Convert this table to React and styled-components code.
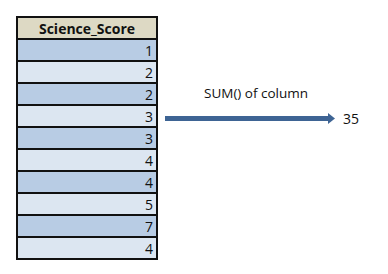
import styled, { createGlobalStyle } from "styled-components"

const scores = [1, 2, 2, 3, 3, 4, 4, 5, 7, 4]

export default function App() {
  return (
    <>
      <GlobalStyle />
      <Page>
        <Table>
          <HeaderCell>Science_Score</HeaderCell>
          {scores.map((s, i) => (
            <Cell key={i} $dark={i % 2 === 0}>
              {s}
            </Cell>
          ))}
        </Table>
        <Annotation>
          <Label>SUM() of column</Label>
          <ArrowRow>
            <svg width="171" height="14" viewBox="0 0 171 14">
              <rect x="0" y="4" width="164" height="5" fill="#3e6494" />
              <polygon points="163,1 170,6.5 163,12" fill="#3e6494" />
            </svg>
            <Result>35</Result>
          </ArrowRow>
        </Annotation>
      </Page>
    </>
  )
}

const GlobalStyle = createGlobalStyle`
  body {
    margin: 0;
    background: #fff;
    font-family: "Open Sans", "Liberation Sans", sans-serif;
  }
`

const Page = styled.div`
  display: flex;
  align-items: flex-start;
  padding: 16px 0 0 16px;
  width: 388px;
  height: 274px;
  box-sizing: border-box;
`

const Table = styled.div`
  display: grid;
  grid-template-columns: 138px;
  grid-auto-rows: 22px;
  border: 2px solid #111;
  border-bottom-width: 0;
  background: #111;
  width: 138px;
`

const HeaderCell = styled.div`
  display: flex;
  align-items: center;
  justify-content: center;
  background: #ddd9c4;
  border-bottom: 2px solid #111;
  font-weight: bold;
  font-size: 14px;
  color: #111;
`

const Cell = styled.div`
  display: flex;
  align-items: center;
  justify-content: flex-end;
  padding-right: 3px;
  background: ${(p) => (p.$dark ? "#b8cce4" : "#dce6f1")};
  border-bottom: 2px solid #111;
  font-size: 14px;
  color: #111;
`

const Annotation = styled.div`
  display: flex;
  flex-direction: column;
  margin-left: 7px;
  margin-top: 68px;
`

const Label = styled.div`
  padding-left: 39px;
  font-size: 13.5px;
  color: #111;
  line-height: 19px;
`

const ArrowRow = styled.div`
  display: flex;
  align-items: center;
  gap: 7px;
  margin-top: 9px;
`

const Result = styled.span`
  font-size: 14px;
  color: #111;
  line-height: 14px;
`
